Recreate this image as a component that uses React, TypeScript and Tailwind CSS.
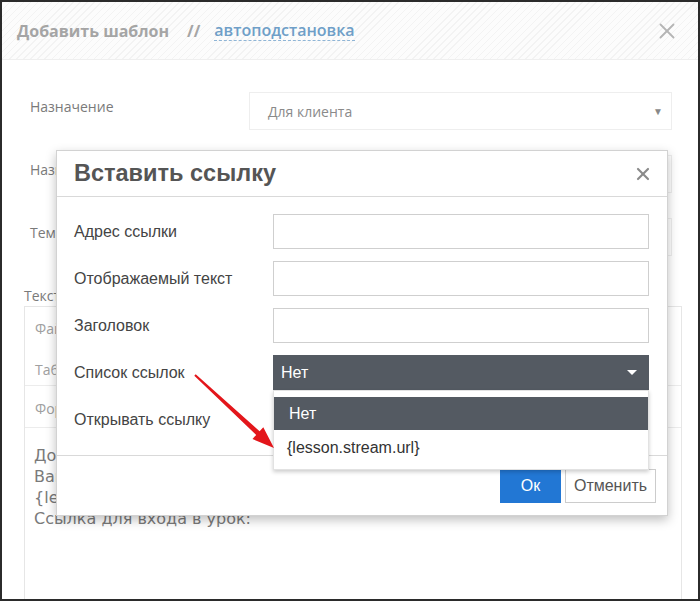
import { X } from "lucide-react";

const rows = [
    { label: "Назначение", select: true },
    { label: "Название", select: false },
    { label: "Тема", select: false },
];

const linkRows = ["Адрес ссылки", "Отображаемый текст", "Заголовок"];

export default function App() {
    return (
        <div className="relative w-[700px] h-[601px] overflow-hidden border-2 border-[#2b2b2b] bg-white font-['Open_Sans',sans-serif]">
            {/* background dialog header */}
            <div className="h-[58px] flex items-center pl-[15px] pr-[18px] border-b border-[#efefef] bg-[repeating-linear-gradient(135deg,#f3f3f3_0px,#f3f3f3_1px,#fcfcfc_1px,#fcfcfc_5px)]">
                <span className="text-[16px] font-bold text-[#a5a5a5]">Добавить шаблон</span>
                <span className="ml-[18px] text-[16px] font-bold text-[#a5a5a5]">//</span>
                <span className="ml-[14px] text-[16px] font-semibold text-[#6f9fc8] leading-[20px] border-b border-dashed border-[#8fb5d6]">
                    автоподстановка
                </span>
                <X size={26} strokeWidth={1.7} className="ml-auto text-[#b5b5b5]" />
            </div>

            {/* background form */}
            <div className="pt-[32px] pl-[28px] pr-[26px] flex flex-col gap-[25px]">
                {rows.map((row) => (
                    <div key={row.label} className="flex items-center">
                        <span className="w-[219px] mb-[9px] text-[14px] text-[#7a7a7a]">{row.label}</span>
                        <div className="w-[423px] h-[38px] border border-[#eeeeee] flex items-center pl-[18px] pr-[8px] text-[14px] text-[#8a8a8a]">
                            {row.select && (
                                <>
                                    <span>Для клиента</span>
                                    <span className="ml-auto text-[10px] text-[#888]">▼</span>
                                </>
                            )}
                        </div>
                    </div>
                ))}
            </div>

            <div className="mt-[31px] pl-[22px] text-[14px] text-[#7a7a7a] leading-[18px]">Текст</div>
            <div className="ml-[22px] mt-[1px] w-[658px] h-[300px] border border-[#e6e6e6]">
                <div className="h-[41px] flex items-center pl-[10px] pt-[2px] text-[14px] text-[#a0a0a0]">Файл</div>
                <div className="h-[38px] flex items-center pl-[10px] pt-[6px] text-[14px] text-[#a0a0a0] border-b border-[#ececec]">Таблица</div>
                <div className="h-[42px] flex items-center pl-[10px] pt-[3px] text-[14px] text-[#a0a0a0] border-b border-[#ececec]">Формат</div>
                <div className="pt-[17px] pl-[9px] text-[16px] leading-[21px] text-[#7a7a7a] font-['DejaVu_Sans',sans-serif]">
                    <div>Добрый день!</div>
                    <div>Вам назначен урок</div>
                    <div>{"{lesson.start}"}</div>
                    <div>Ссылка для входа в урок:</div>
                </div>
            </div>

            {/* link modal */}
            <div className="absolute left-[54px] top-[148px] w-[612px] h-[366px] bg-white border border-[#d2d2d2] shadow-[0_4px_10px_rgba(0,0,0,0.25)] font-['Liberation_Sans',Arial,sans-serif]">
                <div className="h-[46px] flex items-center pl-[17px] pr-[14px] border-b border-[#d9d9d9]">
                    <span className="text-[23.5px] font-bold text-[#555555]">Вставить ссылку</span>
                    <X size={20} strokeWidth={2.6} className="ml-auto text-[#8a8a8a]" />
                </div>

                <div className="h-[259px] pt-[17px] pl-[17px] pr-[17px] flex flex-col gap-[12px] border-b border-[#d9d9d9]">
                    {linkRows.map((label) => (
                        <div key={label} className="flex items-center">
                            <span className="w-[199px] text-[16px] text-[#444]">{label}</span>
                            <div className="w-[376px] h-[35px] border border-[#cfcfcf] bg-white" />
                        </div>
                    ))}
                    <div className="flex items-center">
                        <span className="w-[199px] text-[16px] text-[#444]">Список ссылок</span>
                        <div className="relative w-[376px] h-[35px]">
                            <div className="h-full bg-[#545a62] flex items-center pl-[8px] pr-[12px] text-[16px] text-white">
                                <span>Нет</span>
                                <span className="ml-auto w-0 h-0 border-l-[5px] border-r-[5px] border-t-[5px] border-l-transparent border-r-transparent border-t-white" />
                            </div>
                            <div className="absolute left-0 top-full z-10 w-[376px] pt-[6px] pb-[3px] bg-white border border-[#e2e2e2] shadow-[0_2px_4px_rgba(0,0,0,0.2)]">
                                <div className="h-[33px] bg-[#545a62] flex items-center pl-[15px] text-[16px] text-white">Нет</div>
                                <div className="h-[36px] flex items-center pl-[13px] text-[16px] text-[#333]">{"{lesson.stream.url}"}</div>
                            </div>
                        </div>
                    </div>
                    <div className="flex items-center">
                        <span className="w-[199px] text-[16px] text-[#444]">Открывать ссылку</span>
                        <div className="w-[376px] h-[35px] border border-[#cfcfcf]" />
                    </div>
                </div>

                <div className="flex justify-end items-center gap-[4px] pt-[13px] pr-[11px]">
                    <button className="w-[61px] h-[34px] bg-[#2277d4] text-white text-[16px]">Ок</button>
                    <button className="w-[91px] h-[34px] border border-[#cccccc] bg-white text-[#555] text-[16px]">Отменить</button>
                </div>
            </div>

            {/* red arrow */}
            <svg className="absolute left-0 top-0 w-[696px] h-[597px] pointer-events-none z-20" viewBox="2 2 696 597">
                <polygon
                    points="195.7,374.3 259.6,431.3 263.3,427.2 274,448 252.5,439 256.2,434.9 194.3,375.7"
                    fill="#e3161b"
                />
            </svg>
        </div>
    );
}
